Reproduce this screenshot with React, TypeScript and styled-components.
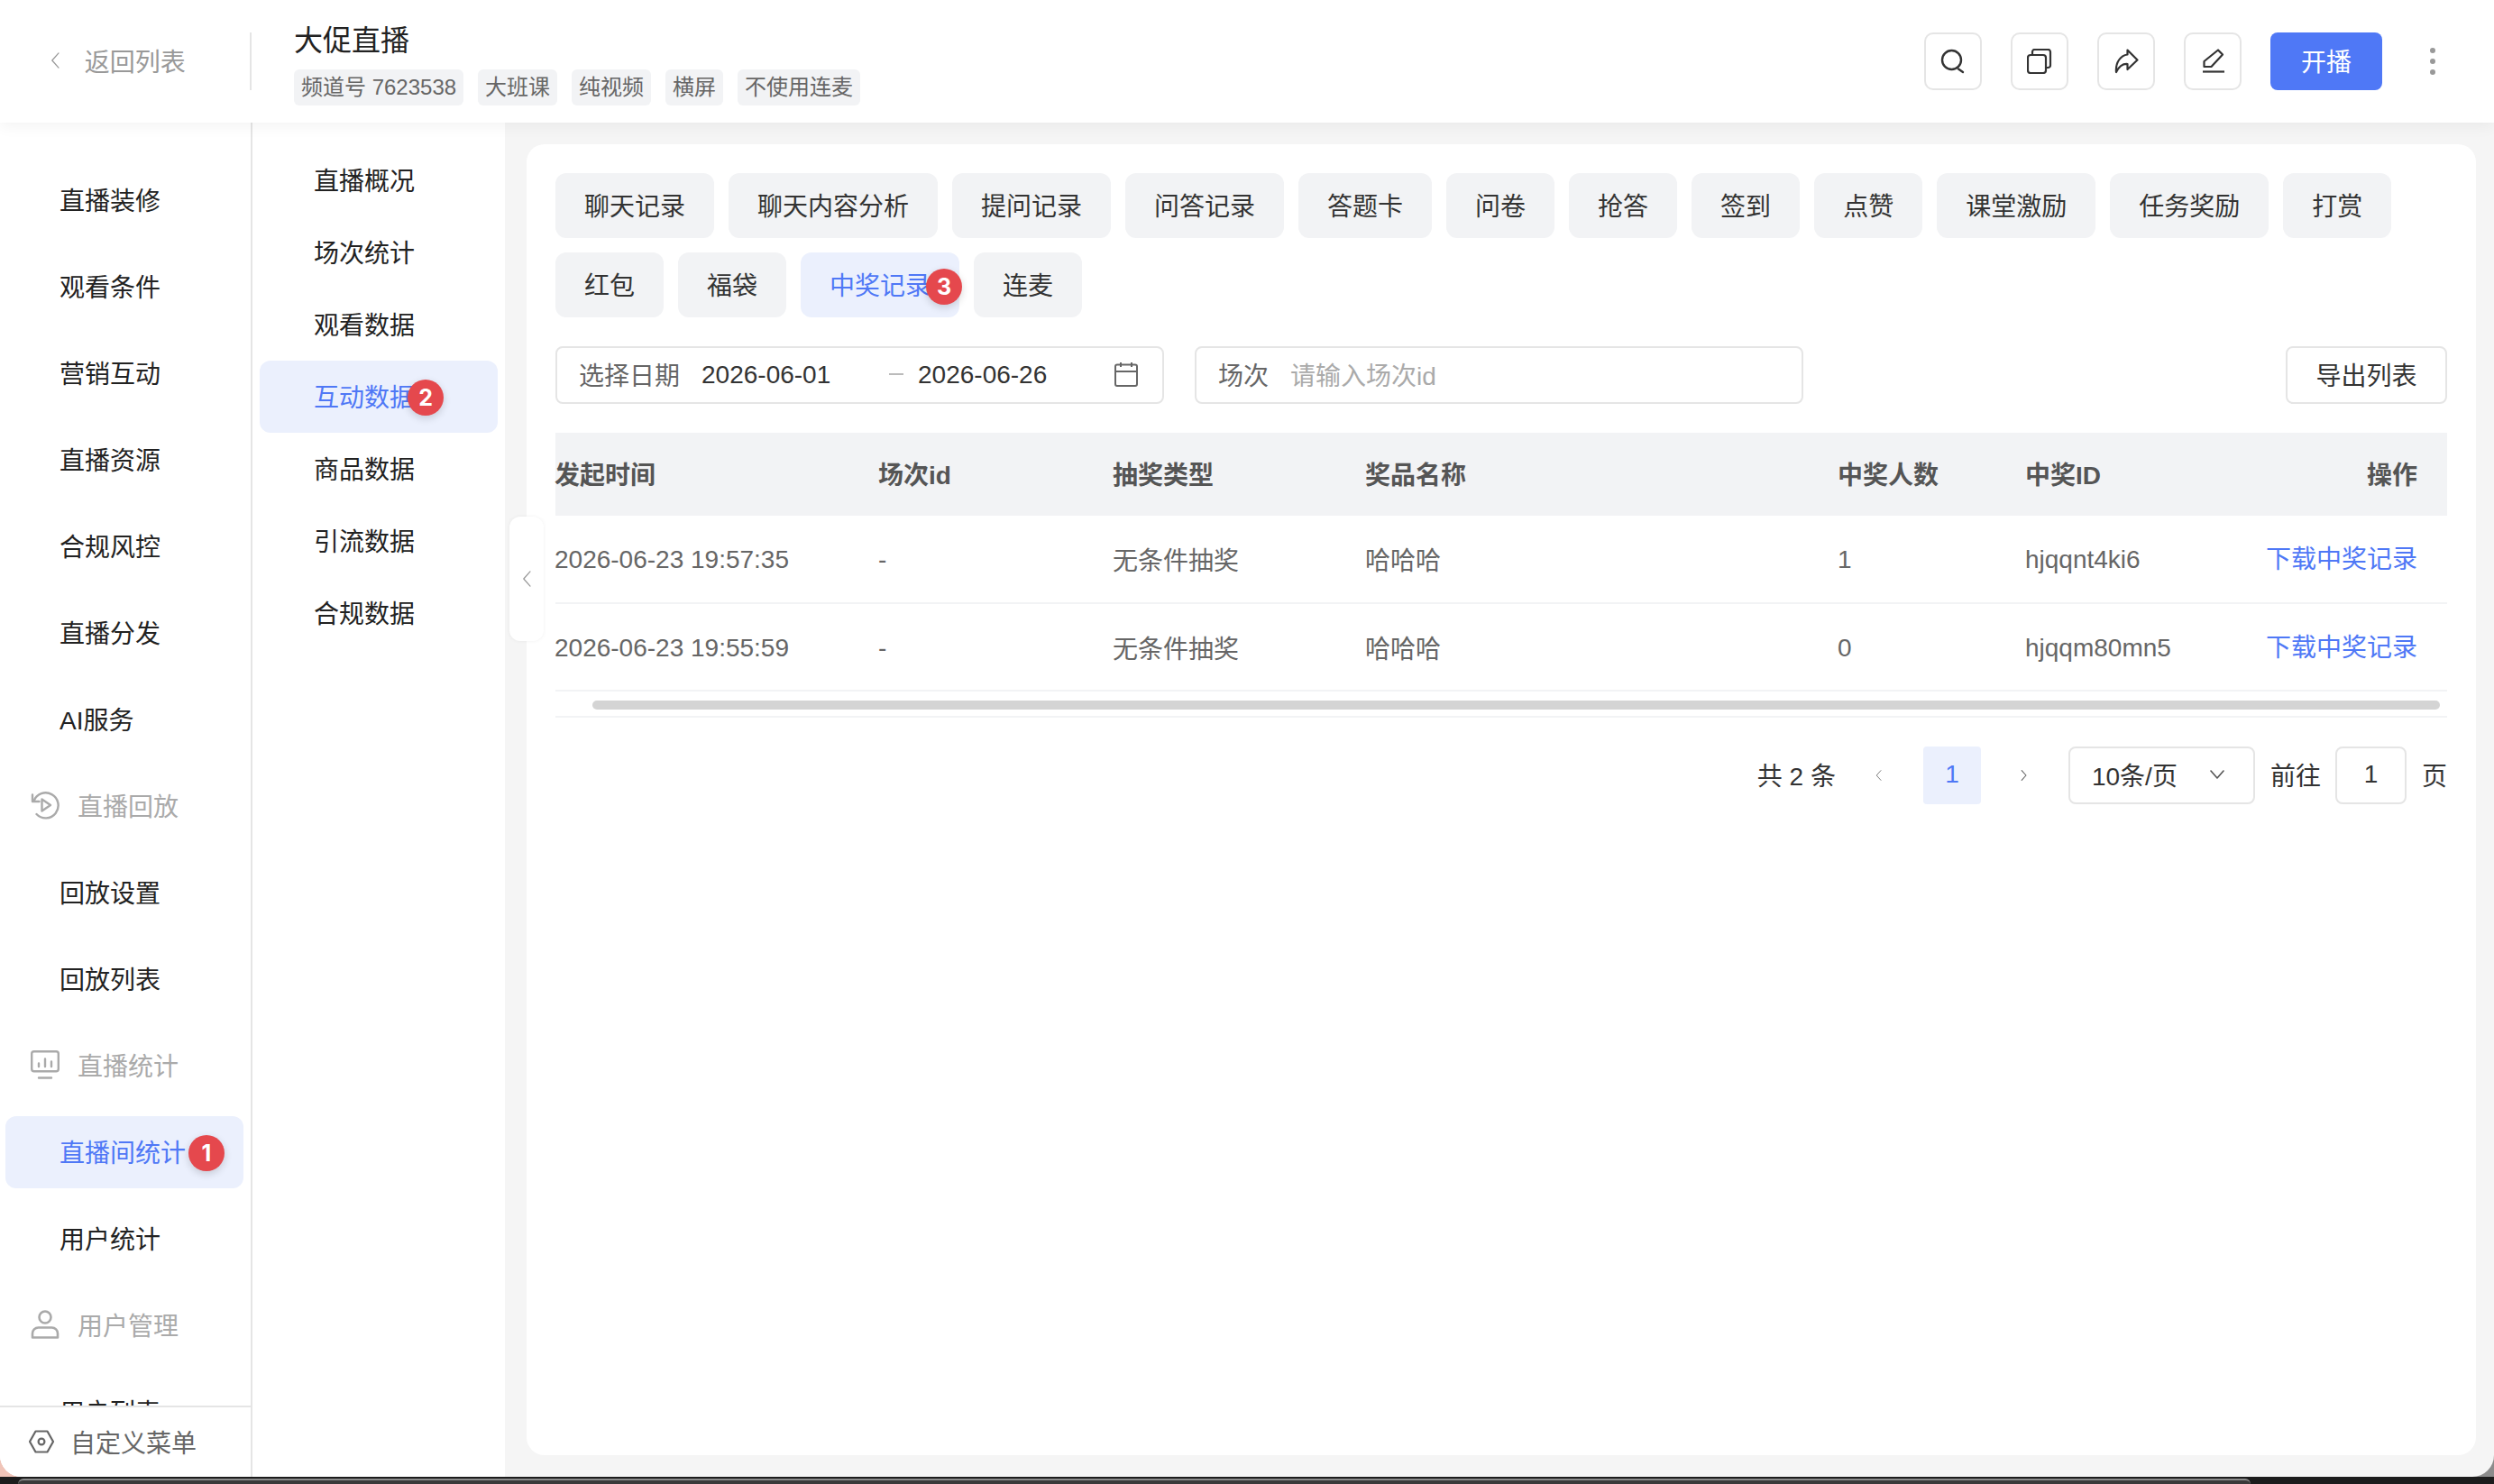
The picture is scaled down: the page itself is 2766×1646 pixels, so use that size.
import styled, { createGlobalStyle } from "styled-components";

const colors = {
  primary: "#4f78f6",
  primaryBg: "#ebf0fd",
  tabBg: "#f2f3f5",
  line: "#e5e5e5",
  text: "#222",
  muted: "#666",
  faint: "#aaa",
  danger: "#e5484d",
};

const GlobalStyle = createGlobalStyle`
  html, body {
    margin: 0;
    padding: 0;
    background: #111;
  }
  * {
    box-sizing: border-box;
  }
  body {
    font-family: "Liberation Sans", "Noto Sans CJK SC", sans-serif;
    font-size: 28px;
    color: ${colors.text};
  }
`;

const Page = styled.div`
  width: 2766px;
  height: 1646px;
  display: flex;
  flex-direction: column;
  overflow: hidden;
  background: linear-gradient(90deg, #f0c4b8 0 50%, #8c8c8c 50% 100%);
`;

const AppWindow = styled.div`
  height: 1638px;
  display: flex;
  flex-direction: column;
  border-radius: 0 0 24px 24px;
  overflow: hidden;
  background: #f5f5f5;
`;

const DesktopStrip = styled.div`
  height: 8px;
  background: #1c1c1c;
  padding: 2px 270px 0 20px;
`;

const BehindWindow = styled.div`
  height: 6px;
  border-top: 2px solid #8a8a8a;
  border-radius: 12px 12px 0 0;
  background: #3a3a3a;
`;

const Header = styled.header`
  height: 136px;
  flex: none;
  display: flex;
  align-items: center;
  background: #fff;
  position: relative;
  z-index: 2;
  box-shadow: 0 4px 16px rgba(0, 0, 0, 0.05);
`;

const BackLink = styled.div`
  width: 277px;
  display: flex;
  align-items: center;
  gap: 27px;
  padding: 0 0 2px 56px;
  color: #999;
`;

const HeaderDivider = styled.div`
  width: 2px;
  height: 64px;
  background: ${colors.line};
`;

const TitleBlock = styled.div`
  margin-left: 47px;
  margin-top: 4px;
  display: flex;
  flex-direction: column;
  gap: 10px;
`;

const Title = styled.div`
  font-size: 32px;
  line-height: 44px;
`;

const TagRow = styled.div`
  display: flex;
  gap: 16px;
`;

const Tag = styled.span`
  height: 40px;
  line-height: 40px;
  padding: 0 8px;
  font-size: 24px;
  color: #666;
  background: ${colors.tabBg};
  border-radius: 6px;
`;

const HeaderActions = styled.div`
  margin-left: auto;
  display: flex;
  align-items: center;
  gap: 32px;
  padding-right: 65px;
`;

const IconButton = styled.button`
  width: 64px;
  height: 64px;
  padding: 0;
  display: flex;
  align-items: center;
  justify-content: center;
  background: #fff;
  border: 2px solid ${colors.line};
  border-radius: 10px;
  color: #333;
`;

const PrimaryButton = styled.button`
  width: 124px;
  height: 64px;
  padding: 0 0 2px;
  border: 0;
  border-radius: 8px;
  background: ${colors.primary};
  color: #fff;
  font: inherit;
`;

const MoreDots = styled.div`
  display: flex;
  flex-direction: column;
  gap: 6px;
  margin-left: 21px;

  i {
    display: block;
    width: 6px;
    height: 6px;
    border-radius: 50%;
    background: #999;
  }
`;

const Body = styled.div`
  flex: 1;
  min-height: 0;
  display: flex;
`;

const Sidebar = styled.aside`
  width: 280px;
  flex: none;
  display: flex;
  flex-direction: column;
  background: #fff;
  border-right: 2px solid ${colors.line};
`;

const NavList = styled.nav`
  flex: 1;
  min-height: 0;
  overflow: hidden;
  padding-top: 46px;
  display: flex;
  flex-direction: column;
  gap: 16px;
`;

const NavItem = styled.div<{ $active?: boolean; $group?: boolean }>`
  position: relative;
  flex: none;
  height: 80px;
  margin: 0 8px 0 6px;
  display: flex;
  align-items: center;
  gap: 20px;
  padding: 0 0 2px ${(props) => (props.$group ? "28px" : "60px")};
  border-radius: 12px;
  color: ${(props) =>
    props.$active ? colors.primary : props.$group ? colors.faint : colors.text};
  background: ${(props) => (props.$active ? colors.primaryBg : "transparent")};
`;

const SidebarFooter = styled.div`
  height: 79px;
  flex: none;
  display: flex;
  align-items: center;
  gap: 18px;
  padding: 0 0 2px 32px;
  border-top: 2px solid ${colors.line};
  color: ${colors.muted};
  background: #fff;
`;

const SubNav = styled.div`
  width: 280px;
  flex: none;
  padding: 24px 8px 0;
  background: #fff;
`;

const SubNavItem = styled.div<{ $active?: boolean }>`
  position: relative;
  height: 80px;
  display: flex;
  align-items: center;
  padding: 0 0 2px 60px;
  border-radius: 12px;
  color: ${(props) => (props.$active ? colors.primary : colors.text)};
  background: ${(props) => (props.$active ? colors.primaryBg : "transparent")};
`;

const NumberBadge = styled.span<{ $left: number }>`
  position: absolute;
  left: ${(props) => props.$left}px;
  top: 21px;
  width: 40px;
  height: 40px;
  display: flex;
  align-items: center;
  justify-content: center;
  border-radius: 50%;
  background: ${colors.danger};
  color: #fff;
  font-family: Inter, sans-serif;
  font-size: 25px;
  font-weight: 700;
  box-shadow: 0 3px 8px rgba(0, 0, 0, 0.16);
`;

const Main = styled.main`
  position: relative;
  flex: 1;
  min-width: 0;
  padding: 24px 20px 24px 24px;
`;

const CollapseHandle = styled.div`
  position: absolute;
  left: 5px;
  top: 437px;
  width: 38px;
  height: 138px;
  display: flex;
  align-items: center;
  justify-content: center;
  background: #fff;
  border-radius: 12px;
  box-shadow: 0 0 4px rgba(0, 0, 0, 0.06);
  color: #999;
  z-index: 1;
`;

const Card = styled.section`
  height: 100%;
  padding: 32px;
  background: #fff;
  border-radius: 20px;
`;

const TabRow = styled.div`
  display: flex;
  flex-wrap: wrap;
  gap: 16px;
`;

const Tab = styled.div<{ $active?: boolean }>`
  position: relative;
  height: 72px;
  padding: 0 32px 2px;
  display: flex;
  align-items: center;
  border-radius: 12px;
  color: ${(props) => (props.$active ? colors.primary : "#333")};
  background: ${(props) => (props.$active ? colors.primaryBg : colors.tabBg)};

  ${NumberBadge} {
    top: 18px;
  }
`;

const FilterRow = styled.div`
  margin-top: 32px;
  display: flex;
  gap: 34px;
`;

const FilterField = styled.div`
  width: 675px;
  height: 64px;
  display: flex;
  align-items: center;
  padding: 0 26px 2px 24px;
  border: 2px solid ${colors.line};
  border-radius: 8px;
`;

const FieldLabel = styled.span`
  color: ${colors.muted};
  margin-right: 24px;
`;

const DateValue = styled.span<{ $width: number }>`
  width: ${(props) => props.$width}px;
  margin-top: 2px;
  color: #333;
`;

const DateDash = styled.span`
  width: 16px;
  height: 2px;
  margin-right: 16px;
  background: #bbb;
`;

const Placeholder = styled.span`
  color: ${colors.faint};
`;

const CalendarSlot = styled.span`
  margin-left: auto;
  display: flex;
  color: ${colors.muted};
`;

const ExportButton = styled.button`
  margin-left: auto;
  width: 179px;
  height: 64px;
  padding: 0 0 2px;
  background: #fff;
  border: 2px solid ${colors.line};
  border-radius: 8px;
  font: inherit;
  color: #333;
`;

const DataTable = styled.table`
  margin-top: 32px;
  width: 100%;
  table-layout: fixed;
  border-collapse: collapse;
`;

const HeadCell = styled.th<{ $right?: boolean }>`
  height: 92px;
  padding: 0 ${(props) => (props.$right ? "33px" : "0")} 2px 0;
  background: ${colors.tabBg};
  color: #555;
  font-weight: 700;
  text-indent: -1px;
  text-align: ${(props) => (props.$right ? "right" : "left")};
`;

const BodyCell = styled.td<{ $right?: boolean; $latin?: boolean }>`
  height: 97px;
  padding: ${(props) => (props.$latin ? "2px" : "0")} ${(props) => (props.$right ? "33px" : "0")} 0 0;
  color: ${colors.muted};
  border-bottom: 2px solid ${colors.tabBg};
  text-indent: -1px;
  text-align: ${(props) => (props.$right ? "right" : "left")};
`;

const DownloadLink = styled.a`
  color: ${colors.primary};
  position: relative;
  top: -2px;
`;

const ScrollTrack = styled.div`
  height: 29px;
  padding: 10px 8px 0 41px;
  border-bottom: 2px solid ${colors.tabBg};
`;

const ScrollThumb = styled.div`
  height: 10px;
  border-radius: 5px;
  background: #d4d4d4;
`;

const Pagination = styled.div`
  margin-top: 32px;
  display: flex;
  align-items: center;
  justify-content: flex-end;
  color: #333;
`;

const Total = styled.span`
  margin: 0 44px 2px 0;
`;

const PagerArrow = styled.span`
  display: flex;
  width: 8px;
  color: #666;
`;

const PageNumber = styled.span`
  width: 64px;
  height: 64px;
  margin: 0 44px 0 45px;
  padding-bottom: 2px;
  display: flex;
  align-items: center;
  justify-content: center;
  border-radius: 4px;
  color: ${colors.primary};
  background: ${colors.primaryBg};
`;

const PageSizeSelect = styled.div`
  width: 207px;
  height: 64px;
  margin-left: 45px;
  display: flex;
  align-items: center;
  justify-content: space-between;
  padding: 0 32px 2px 24px;
  border: 2px solid ${colors.line};
  border-radius: 8px;
`;

const JumpLabel = styled.span`
  margin: 0 0 2px 17px;
`;

const JumpInput = styled.span`
  width: 79px;
  height: 64px;
  margin: 0 17px 0 16px;
  padding-bottom: 2px;
  display: flex;
  align-items: center;
  justify-content: center;
  border: 2px solid ${colors.line};
  border-radius: 8px;
`;

const PageSuffix = styled.span`
  margin-bottom: 2px;
`;

type IconProps = { size?: number };

const line = {
  fill: "none",
  stroke: "currentColor",
  strokeWidth: 2,
  strokeLinecap: "round" as const,
  strokeLinejoin: "round" as const,
};

function SearchIcon() {
  return (
    <svg width="28" height="28" viewBox="0 0 28 28" {...line} strokeWidth={2.4}>
      <circle cx="12.5" cy="12.5" r="10.5" />
      <path d="M20 22.5L25 26" />
    </svg>
  );
}

function CopyIcon() {
  return (
    <svg width="28" height="28" viewBox="0 0 28 28" {...line} strokeWidth={2.2}>
      <rect x="1" y="7" width="20" height="20" rx="3" />
      <path d="M6 7V3.5A2.5 2.5 0 0 1 8.5 1H23.5A2.5 2.5 0 0 1 26 3.5V18.5A2.5 2.5 0 0 1 23.5 21H21" />
    </svg>
  );
}

function ShareIcon() {
  return (
    <svg width="28" height="28" viewBox="0 0 28 28" {...line} strokeWidth={2.2}>
      <path d="M3 26C2 15 8 7.5 15.5 6.5V1.5L26.5 12.5L15.5 23V17C10 16.5 6 20 3 26Z" />
    </svg>
  );
}

function EditIcon() {
  return (
    <svg width="28" height="28" viewBox="0 0 28 28" {...line} strokeWidth={2.2}>
      <path d="M20 1.5L25 6.5L12.5 20H4.5V14Z" />
      <path d="M3 25.5H27" strokeLinecap="butt" />
    </svg>
  );
}

function ReplayIcon() {
  return (
    <svg width="32" height="32" viewBox="0 0 32 32" {...line} strokeWidth={2.4}>
      <path d="M3.5 11.5A14 14 0 1 1 6.5 26" />
      <path d="M2 4.5V12H9.5" />
      <path d="M12.5 9.5L22 16L12.5 22.5Z" />
    </svg>
  );
}

function StatsIcon() {
  return (
    <svg width="32" height="32" viewBox="0 0 32 32" {...line} strokeWidth={2.4}>
      <rect x="1.2" y="1.2" width="29.6" height="22" rx="2.5" />
      <path d="M9 14.5V18M16 9.5V18M23 12.5V18M9 30.5H23" />
    </svg>
  );
}

function UserIcon() {
  return (
    <svg width="32" height="32" viewBox="0 0 32 32" {...line} strokeWidth={2.6}>
      <circle cx="16" cy="8" r="6.5" />
      <path d="M2 30.5V26A6.5 6.5 0 0 1 8.5 19.5H23.5A6.5 6.5 0 0 1 30 26V30.5Z" />
    </svg>
  );
}

function HexIcon() {
  return (
    <svg width="28" height="28" viewBox="0 0 28 28" {...line} strokeWidth={2.2}>
      <path d="M7.5 2.5H20.5L27 14L20.5 25.5H7.5L1 14Z" />
      <circle cx="14" cy="14" r="3.4" />
    </svg>
  );
}

function CalendarIcon() {
  return (
    <svg width="28" height="28" viewBox="0 0 28 28" {...line} strokeLinecap="butt">
      <rect x="2" y="3.5" width="24" height="23.5" rx="2" />
      <path d="M2 11H26M8 1V6M20 1V6" />
    </svg>
  );
}

function ChevronLeft({ size = 18 }: IconProps) {
  return (
    <svg width={size * 0.6} height={size} viewBox="0 0 6 10" {...line} strokeWidth={0.7}>
      <path d="M5 0.5L1 5L5 9.5" />
    </svg>
  );
}

function ChevronRight({ size = 12 }: IconProps) {
  return (
    <svg width={size * 0.6} height={size} viewBox="0 0 6 10" {...line} strokeWidth={0.9}>
      <path d="M1 0.5L5 5L1 9.5" />
    </svg>
  );
}

function ChevronDown() {
  return (
    <svg width="16" height="10" viewBox="0 0 16 10" {...line} strokeWidth={1.6} color="#555">
      <path d="M1 1L8 9L15 1" />
    </svg>
  );
}

type NavEntry = {
  label: string;
  icon?: React.ReactNode;
  active?: boolean;
  badge?: number;
};

const navEntries: NavEntry[] = [
  { label: "直播装修" },
  { label: "观看条件" },
  { label: "营销互动" },
  { label: "直播资源" },
  { label: "合规风控" },
  { label: "直播分发" },
  { label: "AI服务" },
  { label: "直播回放", icon: <ReplayIcon /> },
  { label: "回放设置" },
  { label: "回放列表" },
  { label: "直播统计", icon: <StatsIcon /> },
  { label: "直播间统计", active: true, badge: 1 },
  { label: "用户统计" },
  { label: "用户管理", icon: <UserIcon /> },
  { label: "用户列表" },
];

const subNavEntries = ["直播概况", "场次统计", "观看数据", "互动数据", "商品数据", "引流数据", "合规数据"];

const tabs = [
  "聊天记录",
  "聊天内容分析",
  "提问记录",
  "问答记录",
  "答题卡",
  "问卷",
  "抢答",
  "签到",
  "点赞",
  "课堂激励",
  "任务奖励",
  "打赏",
  "红包",
  "福袋",
  "中奖记录",
  "连麦",
];

const tags = ["频道号 7623538", "大班课", "纯视频", "横屏", "不使用连麦"];

const columns = [
  { title: "发起时间", width: 359, latin: true },
  { title: "场次id", width: 260, latin: true },
  { title: "抽奖类型", width: 280, latin: false },
  { title: "奖品名称", width: 524, latin: false },
  { title: "中奖人数", width: 208, latin: true },
  { title: "中奖ID", width: 210, latin: true },
];

const rows = [
  ["2026-06-23 19:57:35", "-", "无条件抽奖", "哈哈哈", "1", "hjqqnt4ki6"],
  ["2026-06-23 19:55:59", "-", "无条件抽奖", "哈哈哈", "0", "hjqqm80mn5"],
];

export default function App() {
  return (
    <Page>
      <GlobalStyle />
      <AppWindow>
        <Header>
          <BackLink>
            <ChevronLeft />
            返回列表
          </BackLink>
          <HeaderDivider />
          <TitleBlock>
            <Title>大促直播</Title>
            <TagRow>
              {tags.map((t) => (
                <Tag key={t}>{t}</Tag>
              ))}
            </TagRow>
          </TitleBlock>
          <HeaderActions>
            <IconButton>
              <SearchIcon />
            </IconButton>
            <IconButton>
              <CopyIcon />
            </IconButton>
            <IconButton>
              <ShareIcon />
            </IconButton>
            <IconButton>
              <EditIcon />
            </IconButton>
            <PrimaryButton>开播</PrimaryButton>
            <MoreDots>
              <i />
              <i />
              <i />
            </MoreDots>
          </HeaderActions>
        </Header>
        <Body>
          <Sidebar>
            <NavList>
              {navEntries.map((n) => (
                <NavItem key={n.label} $active={n.active} $group={!!n.icon}>
                  {n.icon}
                  {n.label}
                  {n.badge && <NumberBadge $left={203}>{n.badge}</NumberBadge>}
                </NavItem>
              ))}
            </NavList>
            <SidebarFooter>
              <HexIcon />
              自定义菜单
            </SidebarFooter>
          </Sidebar>
          <SubNav>
            {subNavEntries.map((s) => (
              <SubNavItem key={s} $active={s === "互动数据"}>
                {s}
                {s === "互动数据" && <NumberBadge $left={164}>2</NumberBadge>}
              </SubNavItem>
            ))}
          </SubNav>
          <Main>
            <CollapseHandle>
              <ChevronLeft />
            </CollapseHandle>
            <Card>
              <TabRow>
                {tabs.map((t) => (
                  <Tab key={t} $active={t === "中奖记录"}>
                    {t}
                    {t === "中奖记录" && <NumberBadge $left={139}>3</NumberBadge>}
                  </Tab>
                ))}
              </TabRow>
              <FilterRow>
                <FilterField>
                  <FieldLabel>选择日期</FieldLabel>
                  <DateValue $width={208}>2026-06-01</DateValue>
                  <DateDash />
                  <DateValue $width={150}>2026-06-26</DateValue>
                  <CalendarSlot>
                    <CalendarIcon />
                  </CalendarSlot>
                </FilterField>
                <FilterField>
                  <FieldLabel>场次</FieldLabel>
                  <Placeholder>请输入场次id</Placeholder>
                </FilterField>
                <ExportButton>导出列表</ExportButton>
              </FilterRow>
              <DataTable>
                <colgroup>
                  {columns.map((c) => (
                    <col key={c.title} width={c.width} />
                  ))}
                  <col />
                </colgroup>
                <thead>
                  <tr>
                    {columns.map((c) => (
                      <HeadCell key={c.title}>{c.title}</HeadCell>
                    ))}
                    <HeadCell $right>操作</HeadCell>
                  </tr>
                </thead>
                <tbody>
                  {rows.map((r) => (
                    <tr key={r[0]}>
                      {r.map((v, i) => (
                        <BodyCell key={i} $latin={columns[i].latin}>
                          {v}
                        </BodyCell>
                      ))}
                      <BodyCell $right>
                        <DownloadLink>下载中奖记录</DownloadLink>
                      </BodyCell>
                    </tr>
                  ))}
                </tbody>
              </DataTable>
              <ScrollTrack>
                <ScrollThumb />
              </ScrollTrack>
              <Pagination>
                <Total>共 2 条</Total>
                <PagerArrow>
                  <ChevronLeft size={12} />
                </PagerArrow>
                <PageNumber>1</PageNumber>
                <PagerArrow>
                  <ChevronRight />
                </PagerArrow>
                <PageSizeSelect>
                  10条/页
                  <ChevronDown />
                </PageSizeSelect>
                <JumpLabel>前往</JumpLabel>
                <JumpInput>1</JumpInput>
                <PageSuffix>页</PageSuffix>
              </Pagination>
            </Card>
          </Main>
        </Body>
      </AppWindow>
      <DesktopStrip>
        <BehindWindow />
      </DesktopStrip>
    </Page>
  );
}
